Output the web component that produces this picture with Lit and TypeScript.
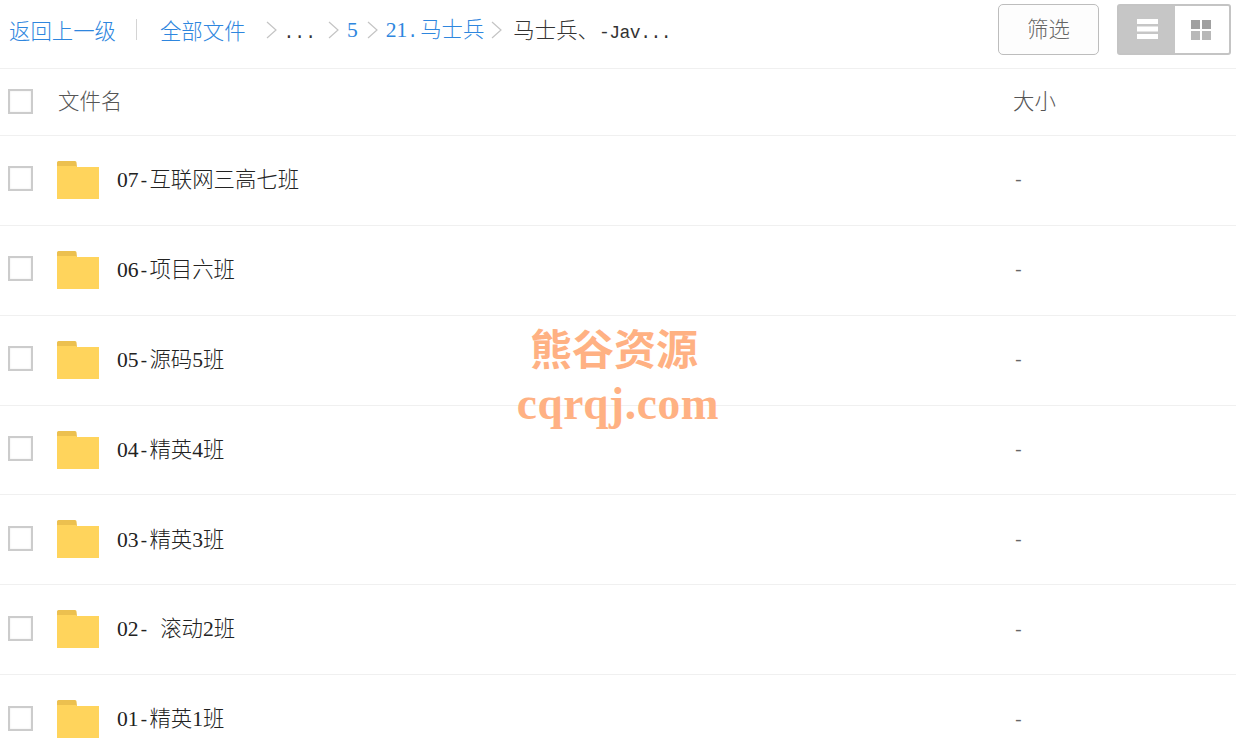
import { LitElement, html, css } from "lit";
import { customElement } from "lit/decorators.js";

const files: string[] = [
  "07-互联网三高七班",
  "06-项目六班",
  "05-源码5班",
  "04-精英4班",
  "03-精英3班",
  "02- 滚动2班",
  "01-精英1班",
];

/* CJK stays in the CJK face; digits and Latin get the faces closest to the reference's half-width glyphs. */
const tok = (s: string) =>
  s.split(/(\d+|[-A-Za-z. ]+)/).filter(Boolean).map((p) =>
    /^\d/.test(p) ? html`<span class="d">${p}</span>`
    : /^[-A-Za-z. ]/.test(p) ? html`<span class="l">${p}</span>`
    : p);

const chev = html`<svg class="chev" width="11" height="18" viewBox="0 0 11 18"><path d="M1 1l9 8-9 8" fill="none" stroke="#c4c4c4" stroke-width="1.2"/></svg>`;
const folder = html`<svg class="folder" width="42" height="38" viewBox="0 0 42 38"><path d="M0 1.500A1.500 1.500 0 0 1 1.500 0H18a1.500 1.500 0 0 1 1.500 1.500L20 6H0z" fill="#ecc04f"/><path d="M0 5H19.500L20 6H42V38H0z" fill="#ffd45c"/></svg>`;

@customElement("app-root")
export class AppRoot extends LitElement {
  static styles = css`
    :host { display: block; position: relative; width: 1236px; height: 743px; overflow: hidden; background: #fff;
      font-family: "Noto Sans CJK SC", "Liberation Sans", sans-serif; font-size: 21.4px; font-weight: 300; }
    .l { font-family: "Liberation Mono", monospace; font-size: 18px; white-space: pre; }
    .d { font-family: "Liberation Serif", serif; font-size: 21.6px; }
    .top { height: 68px; border-bottom: 1px solid #f0f0f0; display: flex; align-items: center; padding-left: 9px; color: #2e86de; }
    .crumbs { display: flex; align-items: center; line-height: 1; margin-top: -9px; white-space: nowrap; }
    .sep { width: 1px; height: 21px; background: #d4d4d4; margin: 0 23px 0 20px; }
    .chev { flex: none; display: block; }
    .c1 { margin: 0 7px 0 20px; } .c2 { margin: 0 8px 0 12px; } .c3 { margin: 0 8px 0 9px; } .c4 { margin: 0 11px 0 7px; }
    .gap { margin-left: 2px; }
    .tight { letter-spacing: -0.5px; }
    .dark { color: #333; }
    .actions { margin-left: auto; display: flex; align-items: center; padding-right: 5px; margin-top: -9px; }
    .filter { width: 101px; height: 51px; box-sizing: border-box; border: 1px solid #bdbdbd; border-radius: 5px; background: #fdfdfd; color: #666;
      display: flex; align-items: center; justify-content: center; margin-right: 18px; padding-bottom: 4px; }
    .toggle { width: 114px; height: 51px; box-sizing: border-box; border: 2px solid #c4c4c4; border-radius: 3px; display: flex; background: #fff; }
    .toggle > div { flex: 1; display: flex; align-items: center; justify-content: center; }
    .toggle .grid { padding-right: 2px; }
    .toggle .on { background: #c6c6c6; flex: none; width: 56px; }
    .head, .row { display: flex; align-items: center; border-bottom: 1px solid #f0f0f0; box-sizing: border-box; padding-left: 8px; }
    .head { height: 67px; color: #555; }
    .row { height: 89.86px; color: #222; }
    .cb { width: 25px; height: 25px; box-sizing: border-box; border: 2px solid #cccccc; flex: none; background: #fff; box-shadow: inset 0 0 2px #e6e6e6; }
    .head .cb { margin-right: 25px; margin-top: -2px; }
    .row .cb { margin-right: 24px; margin-top: -3px; }
    .folder { flex: none; margin-right: 18px; margin-top: -1px; }
    .name { flex: none; line-height: 1; }
    .size { line-height: 1; }
    .row .name { width: 896px; margin-top: -2px; }
    .head .name { width: 955px; margin-top: -4px; }
    .head .size { margin-top: -4px; }
    .dash { color: #666; margin-top: 2px; }
    .mark { position: absolute; left: 460px; top: 326px; width: 316px; text-align: center; color: #ffb183; font-weight: 700; line-height: 1; pointer-events: none; }
    .mark .a { font-size: 42px; height: 54px; margin-left: -8px; }
    .mark .b { font-family: "Liberation Serif", serif; font-size: 45.4px; letter-spacing: 0.6px; margin-top: 2px; }
  `;

  render() {
    return html`
      <div class="top">
        <div class="crumbs">
          <span>返回上一级</span><span class="sep"></span><span>全部文件</span>
          <span class="c1">${chev}</span><span class="dark">${tok("...")}</span>
          <span class="c2">${chev}</span><span>${tok("5")}</span>
          <span class="c3">${chev}</span><span>${tok("21.")}<span class="gap">马士兵</span></span>
          <span class="c4">${chev}</span><span class="dark">马士兵、<span class="tight">${tok("-Jav...")}</span></span>
        </div>
        <div class="actions">
          <div class="filter">筛选</div>
          <div class="toggle">
            <div class="on"><svg width="21" height="21" viewBox="0 0 21 21"><path d="M0 0h21v5H0zM0 7.500h21v5H0zM0 15h21v5H0z" fill="#fff"/></svg></div>
            <div class="grid"><svg width="20" height="20" viewBox="0 0 20 20"><path d="M0 0h9v9H0zM11 0h9v9h-9z" fill="#a0a0a0"/><path d="M0 11h9v9H0zM11 11h9v9h-9z" fill="#b8b8b8"/></svg></div>
          </div>
        </div>
      </div>
      <div class="head"><span class="cb"></span><span class="name">文件名</span><span class="size">大小</span></div>
      ${files.map((f) => html`<div class="row"><span class="cb"></span>${folder}<span class="name">${tok(f)}</span><span class="size dash l">-</span></div>`)}
      <div class="mark"><div class="a">熊谷资源</div><div class="b">cqrqj.com</div></div>
    `;
  }
}
